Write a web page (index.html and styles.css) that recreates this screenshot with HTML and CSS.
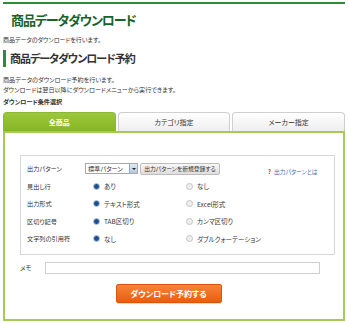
FILE: index.html
```html
<!DOCTYPE html>
<html lang="ja">
<head>
  <meta charset="UTF-8" />
  <title>商品データダウンロード</title>
  <link rel="stylesheet" href="styles.css">
</head>
<body>
  <div class="page">
    <div class="topline"></div>
    <h1 class="title">商品データダウンロード</h1>
    <p class="lead">商品データのダウンロードを行います。</p>

    <h2 class="section">商品データダウンロード予約</h2>
    <p class="desc">商品データのダウンロード予約を行います。<br>ダウンロードは翌日以降にダウンロードメニューから実行できます。</p>
    <p class="label-bold">ダウンロード条件選択</p>

    <div class="tabs">
      <div class="tab active">全商品</div>
      <div class="tab">カテゴリ指定</div>
      <div class="tab">メーカー指定</div>
    </div>

    <div class="panel">
      <div class="form-box">
        <div class="row">
          <div class="row-label">出力パターン</div>
          <div class="pattern">
            <div class="select">
              <span class="select-text">標準パターン</span>
              <span class="select-arrow"></span>
            </div>
            <button class="btn-gray">出力パターンを新規登録する</button>
          </div>
          <a class="help"><span class="q">?</span>出力パターンとは</a>
        </div>
        <div class="row">
          <div class="row-label">見出し行</div>
          <div class="opt"><span class="radio on"></span>あり</div>
          <div class="opt"><span class="radio"></span>なし</div>
        </div>
        <div class="row">
          <div class="row-label">出力形式</div>
          <div class="opt"><span class="radio on"></span>テキスト形式</div>
          <div class="opt"><span class="radio"></span>Excel形式</div>
        </div>
        <div class="row">
          <div class="row-label">区切り記号</div>
          <div class="opt"><span class="radio on"></span>TAB区切り</div>
          <div class="opt"><span class="radio"></span>カンマ区切り</div>
        </div>
        <div class="row">
          <div class="row-label">文字列の引用符</div>
          <div class="opt"><span class="radio on"></span>なし</div>
          <div class="opt"><span class="radio"></span>ダブルクォーテーション</div>
        </div>
      </div>

      <div class="memo">
        <span class="memo-label">メモ</span>
        <div class="memo-input"></div>
      </div>

      <div class="submit-wrap">
        <button class="btn-submit">ダウンロード予約する</button>
      </div>
    </div>
  </div>
</body>
</html>
```

FILE: styles.css
```css
    body {
      margin: 0;
      background: #fff;
      color: #333;
      font-family: "Noto Sans CJK JP", "Noto Sans", sans-serif;
      font-feature-settings: "palt";
    }
    .page {
      width: 342px;
      padding: 2px 3px 0;
    }
    .topline {
      height: 2px;
      background: #2f8c3c;
    }
    .title {
      margin: 2px 0 0;
      padding-left: 8px;
      height: 28px;
      line-height: 28px;
      font-size: 13px;
      letter-spacing: -1.1px;
      font-weight: bold;
      color: #17632a;
    }
    .lead {
      margin: 1px 0 0;
      line-height: 10px;
      font-size: 6px;
    }
    .section {
      margin: 5px 0 0;
      height: 17px;
      line-height: 17px;
      border-left: 3px solid #2f8c3c;
      padding-left: 4px;
      font-size: 11px;
      letter-spacing: -1px;
      font-weight: bold;
      color: #333;
    }
    .desc {
      margin: 8px 0 0;
      line-height: 9.5px;
      font-size: 6.1px;
    }
    .label-bold {
      margin: 2.5px 0 0;
      line-height: 9px;
      font-size: 6.1px;
      font-weight: bold;
    }
    .tabs {
      margin-top: 6.5px;
      display: flex;
      gap: 2px;
      height: 19px;
    }
    .tab {
      flex: 1;
      border: 1px solid #cfcfcf;
      border-bottom: none;
      border-radius: 4px 4px 0 0;
      background: linear-gradient(#fff, #eeeeee);
      text-align: center;
      line-height: 19px;
      font-size: 7px;
      color: #333;
    }
    .tab.active {
      border-color: #8ab832;
      background: linear-gradient(#9cc83c, #86b524);
      color: #fff;
      font-weight: bold;
    }
    .panel {
      border: 2px solid #a7c956;
      padding: 22px 8px 16px 15px;
    }
    .form-box {
      border: 1px solid #d6d6d6;
      padding: 4px 0 6px 6px;
    }
    .row {
      display: flex;
      align-items: center;
      height: 17.5px;
      font-size: 6.5px;
    }
    .row-label {
      width: 58px;
      flex: none;
      font-size: 6.2px;
    }
    .pattern {
      display: flex;
      align-items: center;
      gap: 2px;
      width: 183px;
    }
    .select {
      display: flex;
      align-items: center;
      height: 11px;
      width: 53px;
      border: 1px solid #a9a9a9;
      background: #fff;
      box-sizing: border-box;
    }
    .select-text {
      flex: 1;
      padding-left: 2px;
      font-size: 6.2px;
    }
    .select-arrow {
      width: 7px;
      height: 9px;
      border-left: 1px solid #8ea9c9;
      background: linear-gradient(#dfe9f6, #b4c9e4);
      position: relative;
    }
    .select-arrow::after {
      content: "";
      position: absolute;
      left: 1.5px;
      top: 3.5px;
      border-left: 2px solid transparent;
      border-right: 2px solid transparent;
      border-top: 2px solid #222;
    }
    .btn-gray {
      height: 12px;
      width: 80px;
      padding: 0;
      border: 1px solid #bdbdbd;
      border-radius: 2px;
      background: linear-gradient(#f7f7f7, #dedede);
      font-family: inherit;
      font-feature-settings: "palt";
      font-size: 5.8px;
      color: #333;
      line-height: 10px;
    }
    .help {
      margin-top: 6px;
      color: #3a6fb3;
      font-size: 5.8px;
    }
    .help .q {
      color: #d0262a;
      font-weight: bold;
      margin-right: 3px;
    }
    .opt {
      display: flex;
      align-items: center;
      width: 93px;
      padding-left: 8px;
      box-sizing: border-box;
    }
    .radio {
      width: 5px;
      height: 5px;
      border-radius: 50%;
      border: 1px solid #c4c4c4;
      background: #efefef;
      margin-right: 4px;
      flex: none;
    }
    .radio.on {
      border-color: #9bb3d1;
      background: radial-gradient(circle, #1d4f8c 55%, #6f93c0 100%);
    }
    .memo {
      display: flex;
      align-items: center;
      margin-top: 7px;
      height: 12px;
      font-size: 6.2px;
    }
    .memo-label {
      width: 25px;
    }
    .memo-input {
      width: 275px;
      height: 12px;
      box-sizing: border-box;
      border: 1px solid #cfcfcf;
      background: #fff;
    }
    .submit-wrap {
      display: flex;
      justify-content: center;
      margin-top: 10.5px;
      padding-right: 18px;
    }
    .btn-submit {
      width: 106px;
      height: 19px;
      border: 1px solid #d9570c;
      border-radius: 2px;
      background: linear-gradient(#f7843a, #ea5d0c);
      box-shadow: 0 1px 1px rgba(0, 0, 0, 0.15);
      color: #fff;
      font-family: inherit;
      font-feature-settings: "palt";
      font-weight: bold;
      font-size: 8px;
      line-height: 17px;
      padding: 0;
    }
```
